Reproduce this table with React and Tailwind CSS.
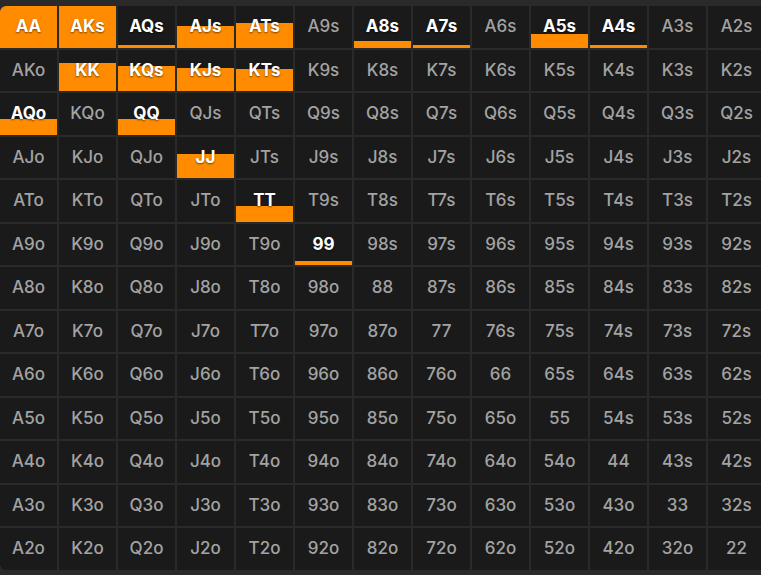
const RANKS = ["A", "K", "Q", "J", "T", "9", "8", "7", "6", "5", "4", "3", "2"];

// bar height as share of the cell
const freq = {
  AA: 1,
  AKs: 1,
  AQs: 0.05,
  AJs: 0.52,
  ATs: 0.6,
  A8s: 0.15,
  A7s: 0.07,
  A5s: 0.32,
  A4s: 0.05,
  KK: 0.68,
  KQs: 0.6,
  KJs: 0.55,
  KTs: 0.52,
  AQo: 0.38,
  QQ: 0.38,
  JJ: 0.57,
  TT: 0.38,
  "99": 0.09,
};

function handName(i, j) {
  if (i === j) return RANKS[i] + RANKS[j];
  if (i < j) return RANKS[i] + RANKS[j] + "s";
  return RANKS[j] + RANKS[i] + "o";
}

function Cell({ name }) {
  const f = freq[name] || 0;
  const active = f > 0;
  return (
    <div className="relative bg-[#1a1a1a] flex items-center justify-center overflow-hidden">
      {active && (
        <div
          className="absolute left-0 right-0 bottom-0 bg-[#ff8c00]"
          style={{ height: `${f * 100}%` }}
        />
      )}
      <span
        className={
          active
            ? "relative text-[17px] font-bold text-white [text-shadow:0_1px_2px_rgba(0,0,0,0.55)]"
            : "relative text-[17px] font-medium text-[#a3a3a3]"
        }
      >
        {name}
      </span>
    </div>
  );
}

export default function App() {
  const cells = [];
  for (let i = 0; i < 13; i++) {
    for (let j = 0; j < 13; j++) {
      cells.push(<Cell key={`${i}-${j}`} name={handName(i, j)} />);
    }
  }

  return (
    <div className="w-[761px] h-[575px] bg-[#2a2a2a] pt-[6px] overflow-hidden font-['Inter',sans-serif]">
      <div className="grid grid-cols-13 grid-rows-13 gap-[2px] w-[765px] h-[564px] rounded-[6px] overflow-hidden">
        {cells}
      </div>
    </div>
  );
}
